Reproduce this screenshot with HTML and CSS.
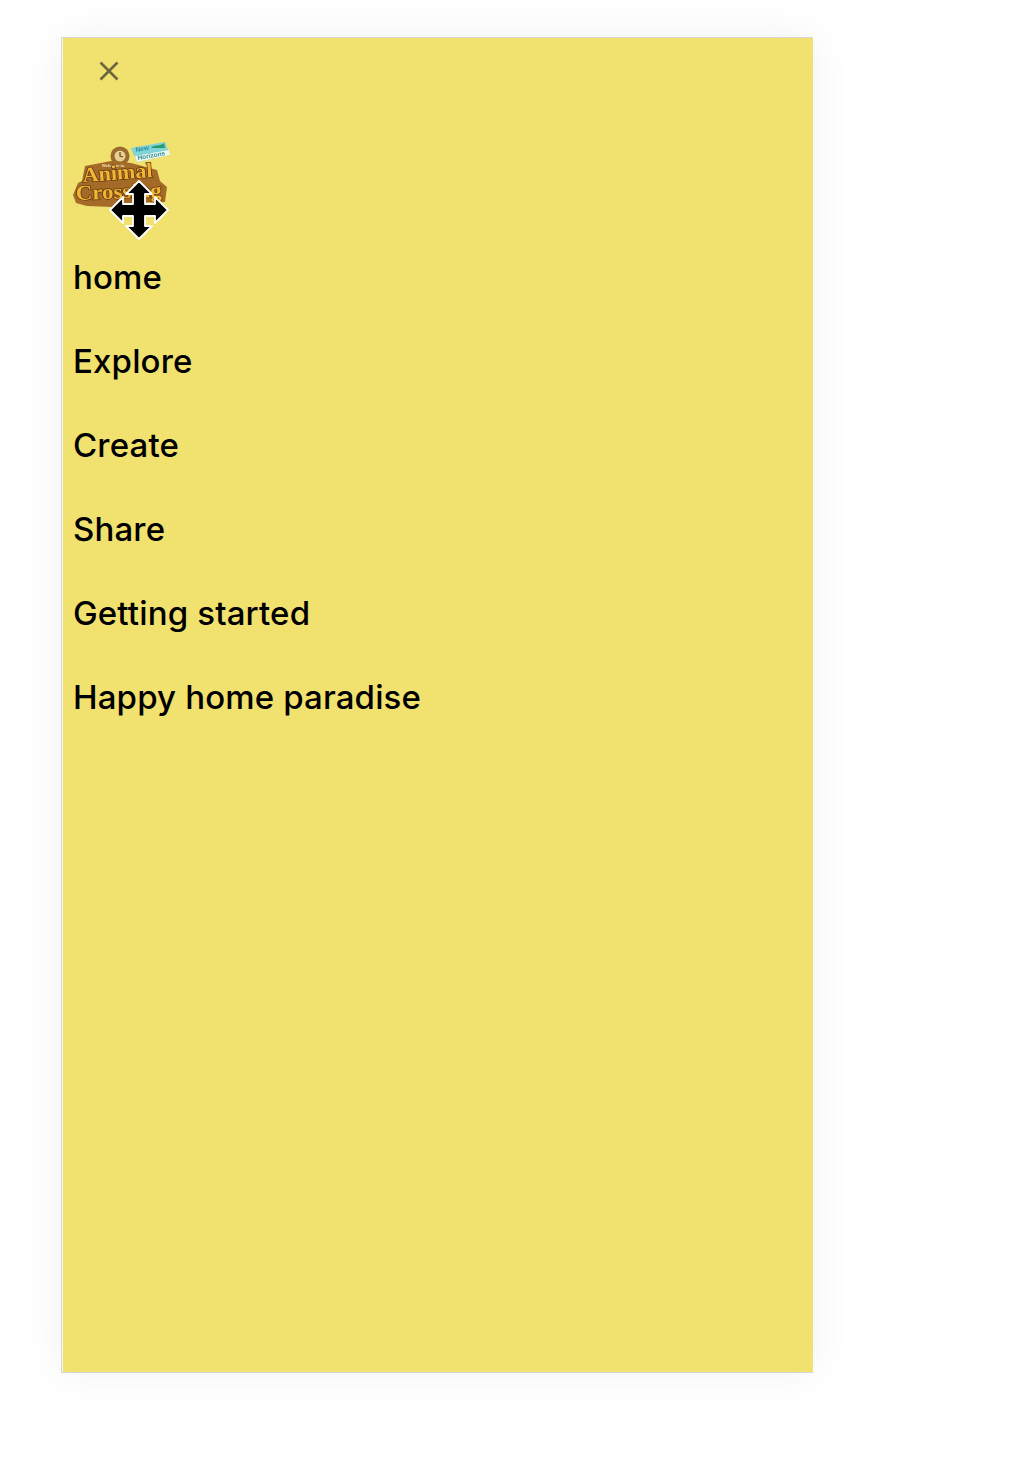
FILE: index.html
```html
<!DOCTYPE html>
<html lang="en">
<head>
<meta charset="utf-8">
<title>Animal Crossing menu</title>
<link rel="stylesheet" href="styles.css">
</head>
<body>
<aside class="panel">
  <button class="close" aria-label="Close">
    <svg width="22" height="22" viewBox="0 0 22 22"><path d="M2.5 2.5L19.5 19.5M19.5 2.5L2.5 19.5" stroke="#6d6540" stroke-width="2.6" fill="none"/></svg>
  </button>
  <div class="logo-wrap">
    <svg class="logo" width="98" height="70" viewBox="0 0 98 70">
      <circle cx="47" cy="16" r="9.5" fill="#9a6a2c"/>
      <circle cx="47" cy="16" r="5.5" fill="#e6cf94"/>
      <path d="M47 12v4l3 1" stroke="#6b4517" stroke-width="1.2" fill="none"/>
      <path d="M12 26L38 21L58 23L84 30L87 41L94 47L92 62L60 63L40 67L14 66L3 63L0 55L5 43L9 41Z" fill="#a46a28"/>
      <path d="M58 8L92 2L97 15L64 22Z" fill="#7fd4d8"/>
      <path d="M62 16L96 10L97 15L64 22Z" fill="#f2f7ee"/>
      <path d="M78 8C81 4 86 7 91 3L92 8Z" fill="#2f9a72"/>
      <text class="logo-small" x="63" y="12" transform="rotate(-10 63 12)">New</text>
      <text class="logo-small" x="65" y="20" transform="rotate(-10 65 20)">Horizons</text>
      <text class="logo-tiny" x="29" y="27">Welcome to</text>
      <text class="logo-text" x="10" y="42" textLength="70" lengthAdjust="spacingAndGlyphs" transform="rotate(-4 10 42)">Animal</text>
      <text class="logo-text" x="3" y="60" textLength="86" lengthAdjust="spacingAndGlyphs" transform="rotate(-2 3 60)">Crossing</text>
    </svg>
    <svg class="cursor" width="62" height="62" viewBox="0 0 62 62">
      <path d="M31 2L44 15L37 15L37 25L47 25L47 18L60 31L47 44L47 37L37 37L37 47L44 47L31 60L18 47L25 47L25 37L15 37L15 44L2 31L15 18L15 25L25 25L25 15L18 15Z" fill="#000" stroke="#fff" stroke-width="1.8" stroke-linejoin="round"/>
    </svg>
  </div>
  <nav class="menu">
    <a class="item">home</a>
    <a class="item">Explore</a>
    <a class="item">Create</a>
    <a class="item">Share</a>
    <a class="item">Getting started</a>
    <a class="item">Happy home paradise</a>
  </nav>
</aside>
</body>
</html>
```

FILE: styles.css
```css
* { box-sizing: border-box; }
html, body { margin: 0; height: 100%; background: #fff; overflow: hidden; }
body { padding: 37px 0 0 61px; font-family: "Inter", "Liberation Sans", sans-serif; }
.panel {
  width: 752px;
  height: 1336px;
  background: #f1e16f;
  border-left: 1px solid #d6d6d6;
  border-top: 1px solid #d6d6d6;
  border-bottom: 1px solid #d6d6d6;
  box-shadow: 0 0 40px rgba(0, 0, 0, 0.06), inset 1px 0 0 #f7f6ea;
  padding: 0 0 0 11px;
}
.close {
  display: block;
  background: none;
  border: 0;
  padding: 0;
  margin: 22px 0 0 25px;
  width: 22px;
  height: 22px;
}
.close svg { display: block; }
.logo-wrap { position: relative; margin-top: 58px; height: 113px; }
.logo { display: block; filter: blur(0.4px); }
.logo-text { font: 700 21px "Liberation Serif", serif; fill: #f3b632; stroke: #5e3510; stroke-width: 1.4; paint-order: stroke; }
.logo-small { font: 700 6.5px "Liberation Sans", sans-serif; fill: #2b8f9c; }
.logo-tiny { font: 700 4px "Liberation Sans", sans-serif; fill: #f3e2b0; }
.cursor { position: absolute; left: 35px; top: 39px; }
.menu { display: flex; flex-direction: column; gap: 42px; padding-top: 3px; }
.item { display: block; font-size: 33px; line-height: 42px; color: #000; font-weight: 500; letter-spacing: 0.15px; }
```
